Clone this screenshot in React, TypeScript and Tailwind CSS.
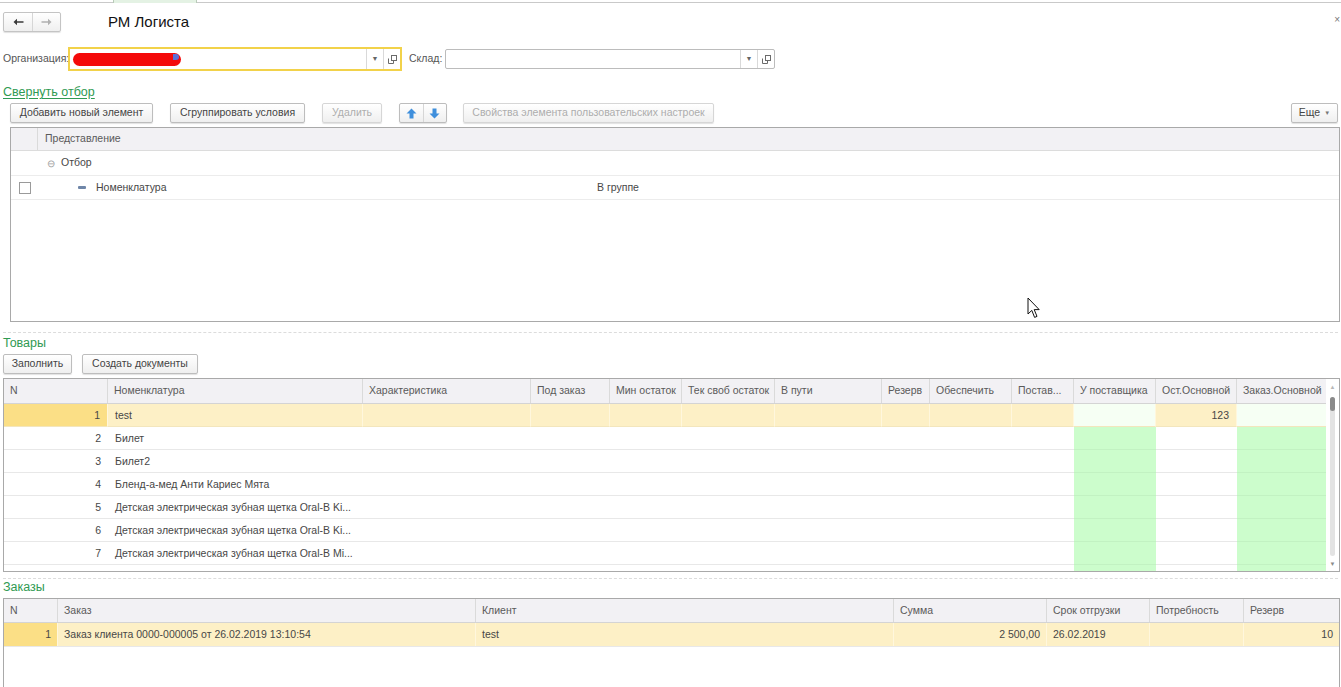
import React from 'react';

// ── small building blocks ─────────────────────────────────────────────

function Btn({
  children,
  disabled,
  className = '',
}: {
  children: React.ReactNode;
  disabled?: boolean;
  className?: string;
}) {
  return (
    <div
      className={`flex h-[20px] items-center justify-center rounded-[2px] border bg-linear-to-b from-white to-[#efefef] text-[10.5px] shadow-[0_1px_1px_rgba(0,0,0,0.12)] ${
        disabled ? 'border-[#d6d6d6] text-[#adadad]' : 'border-[#bdbdbd] text-[#444]'
      } ${className}`}
    >
      {children}
    </div>
  );
}

function OpenIcon() {
  return (
    <svg width="9" height="9" viewBox="0 0 9 9" fill="none" stroke="#6b6b6b" strokeWidth="1">
      <rect x="3.5" y="0.5" width="5" height="5" />
      <path d="M0.5 3.5 V8.5 H5.5 V6" />
    </svg>
  );
}

function ArrowBtn({ down }: { down?: boolean }) {
  return (
    <div className="flex h-full w-[24px] items-center justify-center">
      <svg width="11" height="11" viewBox="0 0 11 11" className={down ? 'rotate-180' : ''}>
        <path d="M5.5 0.5 L10.5 5.5 H7.5 V10.5 H3.5 V5.5 H0.5 Z" fill="#3f8fdc" />
      </svg>
    </div>
  );
}

function SelectInput({ width, focused, children }: { width: number; focused?: boolean; children?: React.ReactNode }) {
  return (
    <div
      style={{ width }}
      className={`flex items-stretch bg-white ${
        focused ? 'h-[24px] border-2 border-[#f2d24a]' : 'h-[20px] border border-[#bcbcbc] rounded-[2px]'
      }`}
    >
      <div className="flex flex-1 items-center pl-[3px]">{children}</div>
      <div className="flex w-[17px] items-center justify-center border-l border-[#d9d9d9] text-[7px] text-[#666]">▼</div>
      <div className="flex w-[17px] items-center justify-center border-l border-[#d9d9d9]">
        <OpenIcon />
      </div>
    </div>
  );
}

// ── goods table ───────────────────────────────────────────────────────

const goodsCols = [
  { title: 'N', w: 104 },
  { title: 'Номенклатура', w: 255 },
  { title: 'Характеристика', w: 168 },
  { title: 'Под заказ', w: 79 },
  { title: 'Мин остаток', w: 72 },
  { title: 'Тек своб остаток', w: 93 },
  { title: 'В пути', w: 107 },
  { title: 'Резерв', w: 48 },
  { title: 'Обеспечить', w: 82 },
  { title: 'Постав...', w: 62 },
  { title: 'У поставщика', w: 82 },
  { title: 'Ост.Основной', w: 81 },
  { title: 'Заказ.Основной', w: 91 },
];

const goods = [
  'test',
  'Билет',
  'Билет2',
  'Бленд-а-мед  Анти Кариес Мята',
  'Детская электрическая зубная щетка Oral-B Ki...',
  'Детская электрическая зубная щетка Oral-B Ki...',
  'Детская электрическая зубная щетка Oral-B Mi...',
  '',
];

function GoodsTable() {
  return (
    <div className="ml-[3px] flex h-[194px] w-[1337px] overflow-hidden border border-[#a9a9a9]">
      <div className="flex flex-1 flex-col overflow-hidden">
        <div className="flex h-[25px] shrink-0 border-b border-[#d4d4d4] bg-[#f2f1f4]">
          {goodsCols.map((c, i) => (
            <div
              key={c.title}
              style={{ width: c.w }}
              className={`flex shrink-0 items-center truncate px-[6px] text-[10.5px] text-[#5a5a5a] ${
                i < goodsCols.length - 1 ? 'border-r border-[#dadada]' : ''
              }`}
            >
              {c.title}
            </div>
          ))}
        </div>
        {goods.map((name, r) => {
          const sel = r === 0;
          return (
            <div key={r} className={`flex h-[23px] shrink-0 ${sel ? 'bg-[#fdf0c6]' : 'bg-white'}`}>
              {goodsCols.map((c, i) => {
                const green = i === 10 || i === 12;
                let bg = '';
                if (sel && i === 0) bg = 'bg-[#fbdf86]';
                if (green) bg = sel ? 'bg-[#f6fff4]' : 'bg-[#ccfdcc]';
                let text = '';
                if (i === 0 && name) text = String(r + 1);
                if (i === 1) text = name;
                if (sel && i === 11) text = '123';
                const right = i === 0 || i === 11;
                return (
                  <div
                    key={i}
                    style={{ width: c.w }}
                    className={`flex shrink-0 items-center truncate border-b pt-[1px] text-[10.5px] text-[#474747] ${bg} ${
                      green && !sel ? 'border-[#c2f2c2]' : sel ? 'border-[#f3e6bd]' : 'border-[#e8e8e8]'
                    } ${right ? 'justify-end pr-[7px]' : 'pl-[7px]'} ${
                      sel && i < goodsCols.length - 1 ? 'border-r border-r-[#fff7dd]' : ''
                    }`}
                  >
                    {text}
                  </div>
                );
              })}
            </div>
          );
        })}
      </div>
      <div className="flex w-[13px] shrink-0 flex-col items-center bg-white">
        <div className="mt-[4px] text-[6px] leading-[8px] text-[#b8b8b8]">▲</div>
        <div className="mt-[6px] flex w-[5px] flex-1 flex-col rounded-full bg-[#e3e3e3]">
          <div className="h-[14px] w-[5px] rounded-full bg-[#8a8a8a]" />
        </div>
        <div className="mb-[3px] mt-[4px] text-[6px] leading-[8px] text-[#8a8a8a]">▼</div>
      </div>
    </div>
  );
}

// ── orders table ──────────────────────────────────────────────────────

const orderCols = [
  { title: 'N', w: 54 },
  { title: 'Заказ', w: 418 },
  { title: 'Клиент', w: 418 },
  { title: 'Сумма', w: 153 },
  { title: 'Срок отгрузки', w: 103 },
  { title: 'Потребность', w: 94 },
  { title: 'Резерв', w: 95 },
];

const orderRow = ['1', 'Заказ клиента 0000-000005 от 26.02.2019 13:10:54', 'test', '2 500,00', '26.02.2019', '', '10'];

function OrdersTable() {
  return (
    <div className="ml-[3px] flex h-[100px] w-[1337px] flex-col overflow-hidden border border-[#a9a9a9]">
      <div className="flex h-[24px] shrink-0 border-b border-[#d4d4d4] bg-[#f2f1f4]">
        {orderCols.map((c, i) => (
          <div
            key={c.title}
            style={{ width: c.w }}
            className={`flex shrink-0 items-center px-[6px] text-[10.5px] text-[#5a5a5a] ${
              i < orderCols.length - 1 ? 'border-r border-[#dadada]' : ''
            }`}
          >
            {c.title}
          </div>
        ))}
      </div>
      <div className="flex h-[24px] shrink-0 border-b border-[#e8e8e8] bg-[#fdf0c6]">
        {orderCols.map((c, i) => {
          const right = i === 0 || i === 3 || i === 6;
          return (
            <div
              key={i}
              style={{ width: c.w }}
              className={`flex shrink-0 items-center text-[10.5px] text-[#474747] ${i === 0 ? 'bg-[#fbdf86]' : ''} ${
                right ? 'justify-end pr-[6px]' : 'pl-[6px]'
              } ${i < orderCols.length - 1 ? 'border-r border-[#fff7dd]' : ''}`}
            >
              {orderRow[i]}
            </div>
          );
        })}
      </div>
    </div>
  );
}

// ── filter settings table ────────────────────────────────────────────

function FilterTable() {
  return (
    <div className="ml-[10px] h-[195px] w-[1330px] border border-[#a9a9a9] bg-white">
      <div className="flex h-[23px] border-b border-[#dcdcdc] bg-[#f2f1f4]">
        <div className="w-[27px] border-r border-[#dadada]" />
        <div className="flex items-center pl-[7px] text-[10.5px] text-[#5a5a5a]">Представление</div>
      </div>
      <div className="flex h-[25px] border-b border-[#ececec]">
        <div className="w-[27px]" />
        <div className="flex items-center pl-[9px] text-[10.5px] text-[#474747]">
          <span className="mr-[6px] text-[10px] text-[#a0a0a0]">⊖</span>Отбор
        </div>
      </div>
      <div className="flex h-[24px] border-b border-[#ececec]">
        <div className="flex w-[27px] items-center justify-center">
          <div className="h-[12px] w-[12px] border border-[#9a9a9a] bg-white" />
        </div>
        <div className="flex w-[559px] items-center pl-[40px] text-[10.5px] text-[#474747]">
          <span className="mr-[10px] h-[3px] w-[8px] rounded-[1px] bg-[#6f86a8]" />
          Номенклатура
        </div>
        <div className="flex items-center text-[10.5px] text-[#474747]">В группе</div>
      </div>
    </div>
  );
}

// ── page ──────────────────────────────────────────────────────────────

export default function App() {
  return (
    <div className="relative h-[687px] w-[1341px] overflow-hidden bg-white font-['Liberation_Sans',Arial,sans-serif] text-[#333]">
      {/* top tab strip */}
      <div className="flex h-[3px] border-b border-[#c9c9c9]">
        <div className="ml-[113px] h-[3px] w-[84px] border-x border-[#b9cbb9] bg-[#e4f2e4]" />
      </div>

      {/* header */}
      <div className="mt-[9px] flex h-[20px] items-center">
        <div className="ml-[3px] flex h-[20px] w-[58px] rounded-[2px] border border-[#c4c4c4] bg-linear-to-b from-white to-[#efefef] shadow-[0_1px_1px_rgba(0,0,0,0.12)]">
          <div className="flex w-[29px] items-center justify-center border-r border-[#d6d6d6]">
            <svg width="11" height="8" viewBox="0 0 11 8">
              <path d="M0.5 4 L4 0.8 V3.2 H10.5 V4.8 H4 V7.2 Z" fill="#3a3a3a" />
            </svg>
          </div>
          <div className="flex flex-1 items-center justify-center">
            <svg width="11" height="8" viewBox="0 0 11 8">
              <path d="M10.5 4 L7 0.8 V3.2 H0.5 V4.8 H7 V7.2 Z" fill="#b0b0b0" />
            </svg>
          </div>
        </div>
        <div className="ml-[47px] text-[15px] text-[#111]">РМ Логиста</div>
      </div>

      {/* organization / warehouse */}
      <div className="mt-[15px] flex items-center">
        <div className="ml-[3px] w-[65px] text-[10.5px] text-[#555]">Организация:</div>
        <SelectInput width={334} focused>
          <div className="relative mt-[1px] h-[13px] w-[108px] rounded-full bg-[#f40a0a]">
            <div className="absolute right-[2px] top-[1px] h-[6px] w-[6px] rounded-r-full bg-[#5b6fd6]" />
          </div>
        </SelectInput>
        <div className="ml-[7px] w-[36px] text-[10.5px] text-[#555]">Склад:</div>
        <SelectInput width={330} />
      </div>

      {/* collapse filter link */}
      <div className="ml-[3px] mt-[14px] text-[12.5px] leading-[15px] text-[#2f9a52] underline underline-offset-2">Свернуть отбор</div>

      {/* filter toolbar */}
      <div className="mt-[3px] flex h-[20px] items-center">
        <Btn className="ml-[10px] w-[143px]">Добавить новый элемент</Btn>
        <Btn className="ml-[17px] w-[135px]">Сгруппировать условия</Btn>
        <Btn className="ml-[17px] w-[60px]" disabled>
          Удалить
        </Btn>
        <div className="ml-[17px] flex h-[20px] w-[48px] rounded-[2px] border border-[#bdbdbd] bg-linear-to-b from-white to-[#efefef] shadow-[0_1px_1px_rgba(0,0,0,0.12)]">
          <ArrowBtn />
          <div className="w-px bg-[#d6d6d6]" />
          <ArrowBtn down />
        </div>
        <Btn className="ml-[16px] w-[251px]" disabled>
          Свойства элемента пользовательских настроек
        </Btn>
        <Btn className="ml-auto mr-[3px] w-[47px]">
          Еще <span className="ml-[4px] text-[6px] text-[#777]">▼</span>
        </Btn>
      </div>

      <div className="mt-[4px]">
        <FilterTable />
      </div>

      <div className="mx-[3px] mt-[10px] border-t border-dashed border-[#dcdcdc]" />

      {/* goods */}
      <div className="ml-[3px] mt-[3px] text-[12.5px] leading-[15px] text-[#2f9a52]">Товары</div>
      <div className="mt-[3px] flex h-[20px] items-center">
        <Btn className="ml-[3px] w-[69px]">Заполнить</Btn>
        <Btn className="ml-[10px] w-[116px]">Создать документы</Btn>
      </div>
      <div className="mt-[4px]">
        <GoodsTable />
      </div>

      <div className="mx-[3px] mt-[6px] border-t border-dashed border-[#dcdcdc]" />

      {/* orders */}
      <div className="ml-[3px] mt-[1px] text-[12.5px] leading-[15px] text-[#2f9a52]">Заказы</div>
      <div className="mt-[3px]">
        <OrdersTable />
      </div>

      {/* close glyph at the window edge */}
      <div className="absolute right-[1px] top-[12px] text-[10px] text-[#777]">×</div>

      {/* mouse pointer */}
      <svg className="absolute left-[1027px] top-[297px]" width="14" height="23" viewBox="0 0 14 23">
        <path d="M1 1 L1 17 L4.8 13.4 L7.6 20.4 L10 19.4 L7.2 12.6 L12.2 12.6 Z" fill="white" stroke="#111" strokeWidth="1" strokeLinejoin="round" />
      </svg>
    </div>
  );
}
